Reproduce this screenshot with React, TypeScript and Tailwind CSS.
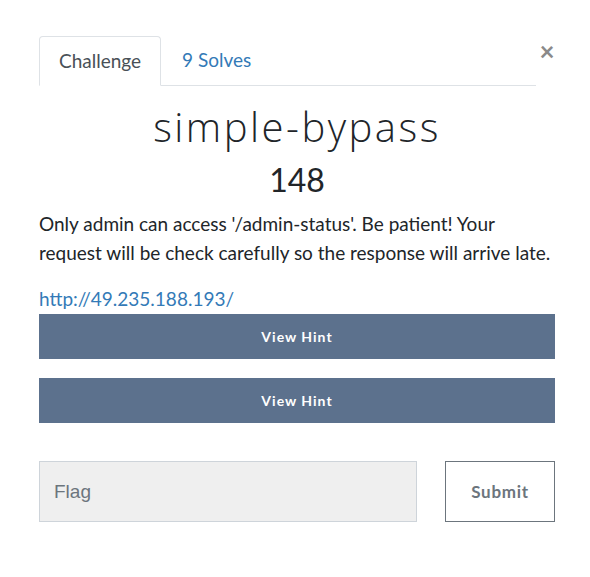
import React from 'react';

const App: React.FC = () => {
  return (
    <div className="min-h-[577px] w-full bg-white font-['Lato',sans-serif] text-[#212529]">
      <div className="pl-[39px] pr-[35px] pt-[36px]">
        <div className="flex items-start">
          <div className="flex flex-1 border-b border-[#dee2e6] mr-[3px]">
            <div className="-mb-px rounded-t-[4px] border border-[#dee2e6] border-b-white bg-white px-[19px] h-[50px] flex items-center text-[19px] text-[#495057]">
              Challenge
            </div>
            <div className="px-[21px] h-[49px] flex items-center text-[19px] text-[#337ab7]">
              9 Solves
            </div>
          </div>
          <button className="mt-[2px] w-[16px] text-[26px] font-bold leading-none text-[#8a8a8a]">×</button>
        </div>

        <h1 className="mt-[18px] text-center font-['Open_Sans',sans-serif] font-light text-[40px] leading-[46px] tracking-[2.5px] text-[#212529]">
          simple-bypass
        </h1>
        <h3 className="mt-[10px] text-center text-[32px] leading-[40px] text-[#212529]">148</h3>

        <p className="mt-[9px] text-[19px] leading-[29px] text-[#212529]">
          Only admin can access '/admin-status'. Be patient! Your request will be check carefully so the response will arrive late.
        </p>
        <a className="mt-[22px] block text-[19px] leading-[20px] text-[#337ab7]">http://49.235.188.193/</a>

        <div className="mt-[5px] flex flex-col gap-[19px]">
          <button className="h-[45px] w-full bg-[#5c718d] text-[14px] font-bold tracking-[1px] text-white">View Hint</button>
          <button className="h-[45px] w-full bg-[#5c718d] text-[14px] font-bold tracking-[1px] text-white">View Hint</button>
        </div>

        <div className="mt-[38px] flex gap-[28px]">
          <input
            className="h-[61px] w-[378px] border border-[#ced4da] bg-[#efefef] px-[14px] text-[19px] font-['Liberation_Sans',sans-serif] placeholder:text-[#6c757d] outline-none"
            placeholder="Flag"
          />
          <button className="h-[61px] w-[110px] border border-[#6c757d] bg-white text-[17px] font-bold tracking-[0.7px] text-[#6c757d]">
            Submit
          </button>
        </div>
      </div>
    </div>
  );
};

export default App;
